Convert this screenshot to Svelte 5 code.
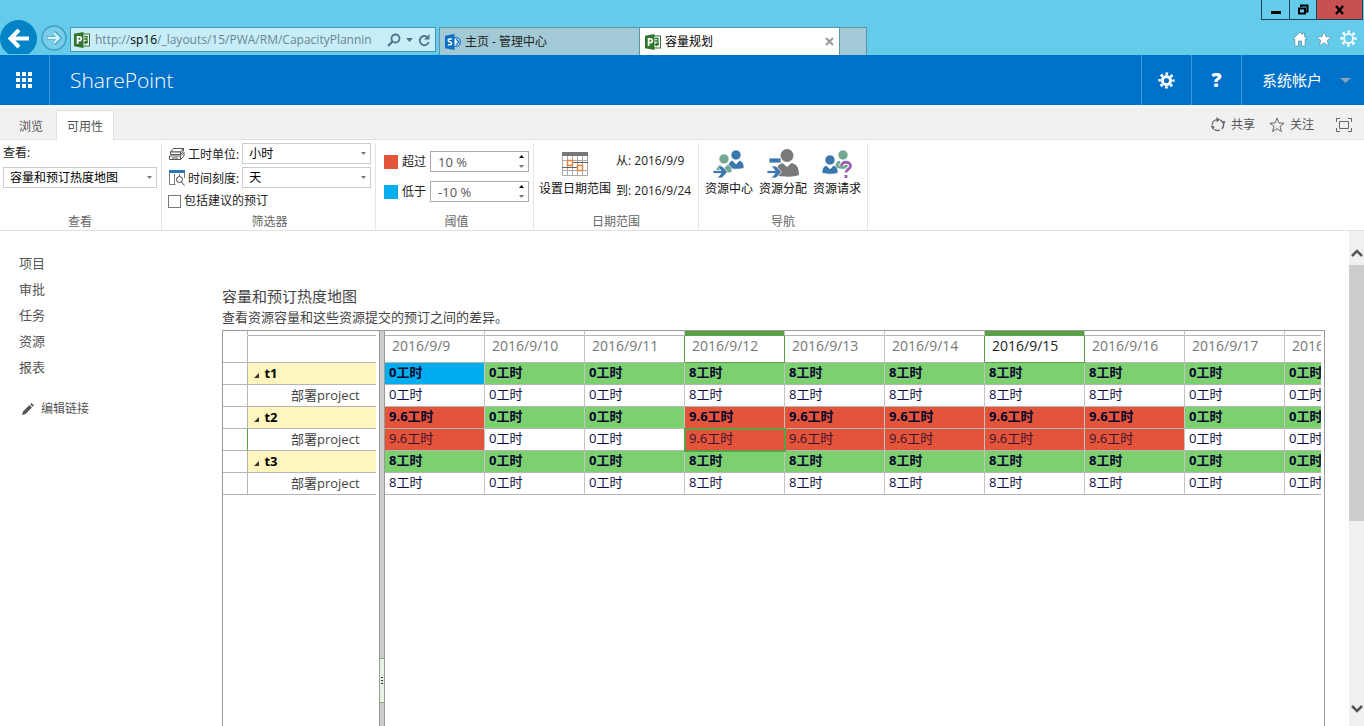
<script lang="ts">
  type Level = 'under' | 'ok' | 'over' | 'none';

  interface Row {
    name: string;
    summary: boolean;
    hours: number[];
    levels: Level[];
  }

  const dates = [
    '2016/9/9',
    '2016/9/10',
    '2016/9/11',
    '2016/9/12',
    '2016/9/13',
    '2016/9/14',
    '2016/9/15',
    '2016/9/16',
    '2016/9/17',
    '2016/9/18',
  ];
  const today = '2016/9/15';
  const selected = { row: 3, col: 3 };

  const workdays = [3, 4, 5, 6, 7];
  const week = (first: number, hours: number) =>
    dates.map((_, i) => (i === 0 ? first : workdays.includes(i) ? hours : 0));
  const fill = (hours: number[], summary: boolean): Level[] =>
    hours.map((h) => (h > 8 ? 'over' : summary ? 'ok' : 'none'));

  function makeRow(name: string, summary: boolean, hours: number[]): Row {
    return { name, summary, hours, levels: fill(hours, summary) };
  }

  const rows: Row[] = [
    makeRow('t1', true, week(0, 8)),
    makeRow('部署project', false, week(0, 8)),
    makeRow('t2', true, week(9.6, 9.6)),
    makeRow('部署project', false, week(9.6, 9.6)),
    makeRow('t3', true, week(8, 8)),
    makeRow('部署project', false, week(8, 8)),
  ];
  rows[0].levels[0] = 'under';

  const links = ['项目', '审批', '任务', '资源', '报表'];

  let view = $state('容量和预订热度地图');
  let unit = $state('小时');
  let scale = $state('天');
  let includeProposed = $state(false);
  let over = $state(10);
  let under = $state(-10);
</script>

{#snippet projectIcon()}
  <svg width="16" height="16" viewBox="0 0 16 16">
    <rect x="8" y="2" width="7.5" height="12" fill="#fff" stroke="#31752f" />
    <path d="M10 4.500h3v2.500h-3M13 7v3M10 10.500h4M12 9l-1.500 1.500L12 12" fill="none" stroke="#31752f" stroke-width="1.3" />
    <path d="M0 1.7 9.5 0v16L0 14.3z" fill="#31752f" />
    <path d="M3.6 12V4.9h1.700c2.600 0 2.600 3.800 0 3.800H3.800" fill="none" stroke="#fff" stroke-width="1.7" />
  </svg>
{/snippet}

{#snippet gearIcon(size: number, color: string, hollow: boolean)}
  <svg width={size} height={size} viewBox="0 0 18 18">
    <g stroke={color} fill="none">
      <circle cx="9" cy="9" r={hollow ? 4.8 : 4.3} stroke-width={hollow ? 1.8 : 3.2} />
      <circle cx="9" cy="9" r="7.3" stroke-width="2.6" stroke-dasharray="2.87 2.87" stroke-dashoffset="1.4" />
    </g>
  </svg>
{/snippet}

{#snippet caret()}
  <svg class="caret" width="5" height="3" viewBox="0 0 5 3"><path d="M0 0h5L2.5 3z" fill="#777" /></svg>
{/snippet}

{#snippet person(x: number, y: number, color: string)}
  <g transform="translate({x} {y})">
    <circle cx="8" cy="5" r="5" fill={color} stroke="#fff" stroke-width=".6" />
    <path d="M0 18c0-4.500 1.500-7 4.500-7.500L8 14l3.500-3.500c3 .5 4.500 3 4.500 7.500-4 1.600-12 1.600-16 0z" fill={color} stroke="#fff" stroke-width=".6" />
  </g>
{/snippet}

<div class="app">
  <header class="chrome">
    <button class="back" aria-label="后退">
      <svg width="38" height="34" viewBox="0 0 38 34">
        <circle cx="18.500" cy="18.500" r="18.500" fill="#0284c6" />
        <path d="M29 18.500H11M19 10l-8.500 8.500L19 27" fill="none" stroke="#fff" stroke-width="4" />
      </svg>
    </button>
    <button class="forward" aria-label="前进">
      <svg width="26" height="26" viewBox="0 0 26 26">
        <circle cx="13" cy="13" r="12" fill="#78cdea" stroke="#3e9fc4" stroke-width="1.500" />
        <path d="M6 13h12M13 7.500l5.500 5.500-5.500 5.500" fill="none" stroke="#3e9fc4" stroke-width="4" />
        <path d="M6.500 13h11M13 8l5 5-5 5" fill="none" stroke="#d5f3fd" stroke-width="2.400" />
      </svg>
    </button>
    <div class="address">
      {@render projectIcon()}
      <span class="url">http://<b>sp16</b>/_layouts/15/PWA/RM/CapacityPlannin</span>
      <svg width="14" height="14" viewBox="0 0 14 14" fill="none" stroke="#4c7686">
        <circle cx="8.500" cy="5.500" r="4" stroke-width="1.800" />
        <path d="M5.500 8.500 1 13" stroke-width="2.200" />
      </svg>
      <svg width="7" height="4" viewBox="0 0 7 4"><path d="M0 0h7L3.500 4z" fill="#4c7686" /></svg>
      <svg width="13" height="14" viewBox="0 0 13 14">
        <path d="M10.500 5.500A4.600 4.600 0 1 0 10.800 9" fill="none" stroke="#4c7686" stroke-width="1.900" />
        <path d="M11.500 1v5.500H6z" fill="#4c7686" />
      </svg>
    </div>
    <nav class="tabs">
      <button class="tab">
        <svg width="16" height="16" viewBox="0 0 16 16">
          <circle cx="11" cy="8" r="4.300" fill="#fff" stroke="#0f6fc4" stroke-width="1.200" />
          <path d="M11 5l3 3-3 3" fill="none" stroke="#0f6fc4" stroke-width="1.400" />
          <path d="M0 1.700 9.500 0v16L0 14.300z" fill="#0f6fc4" />
          <path d="M6.800 5.300c-4-1.400-4.600 1.600-2 2.500 3 1 2.100 4-1.900 2.700" fill="none" stroke="#fff" stroke-width="1.500" />
        </svg>
        <span>主页 - 管理中心</span>
      </button>
      <button class="tab active">
        {@render projectIcon()}
        <span>容量规划</span>
        <svg class="close-tab" width="9" height="9" viewBox="0 0 9 9"><path d="M1 1l7 7M8 1 1 8" stroke="#999" stroke-width="2" /></svg>
      </button>
      <button class="tab new-tab" aria-label="新建选项卡"></button>
    </nav>
    <div class="window-side">
      <div class="window-buttons">
        <button class="minimise" aria-label="最小化">
          <svg width="12" height="12" viewBox="0 0 12 12"><path d="M1 7h10v3H1z" fill="#000" /></svg>
        </button>
        <button class="restore" aria-label="还原">
          <svg width="12" height="12" viewBox="0 0 12 12"><path d="M4 3V1.500h6.500v6H9M2 4.500h6v5H2z" fill="none" stroke="#000" stroke-width="2" /></svg>
        </button>
        <button class="close" aria-label="关闭">
          <svg width="12" height="12" viewBox="0 0 12 12"><path d="M2 2l7 8M9 2l-7 8" stroke="#000" stroke-width="2.400" /></svg>
        </button>
      </div>
      <div class="tools">
        <button aria-label="主页">
          <svg width="16" height="16" viewBox="0 0 16 16"><path d="M8 1 .8 8.300h2V15h3.700v-5h3v5h3.700V8.300h2L12.500 5.500V2h-2v1.500z" fill="#fff" stroke="#5a93a8" stroke-width=".8" /></svg>
        </button>
        <button aria-label="收藏夹">
          <svg width="16" height="16" viewBox="0 0 16 16"><path d="M8 .5l2 5.200 5.600.2-4.400 3.500 1.600 5.600L8 11.800 3.200 15l1.600-5.600L.4 5.900 6 5.700z" fill="#fff" stroke="#5a93a8" stroke-width=".7" /></svg>
        </button>
        <button aria-label="工具">{@render gearIcon(17, '#fff', true)}</button>
      </div>
    </div>
  </header>

  <div class="suite">
    <button class="launcher" aria-label="应用">
      <svg width="16" height="16" viewBox="0 0 16 16" fill="#fff">
        {#each [0, 6, 12] as y}
          {#each [0, 6, 12] as x}
            <rect {x} {y} width="4" height="4" />
          {/each}
        {/each}
      </svg>
    </button>
    <a class="brand" href="#home">SharePoint</a>
    <button class="suite-button" aria-label="设置">{@render gearIcon(17, '#fff', false)}</button>
    <button class="suite-button help">?</button>
    <button class="account">
      <span>系统帐户</span>
      <svg width="11" height="5" viewBox="0 0 11 5"><path d="M0 0h11L5.500 5z" fill="#8aa3b8" /></svg>
    </button>
  </div>

  <div class="ribbon-tabs">
    <button class="ribbon-tab">浏览</button>
    <button class="ribbon-tab current">可用性</button>
    <div class="page-actions">
      <button>
        <svg width="16" height="16" viewBox="0 0 16 16">
          <path d="M2.200 8.500A5.600 5.600 0 0 1 7 2.600M13.500 7a5.600 5.600 0 0 1-1.500 5M10 13.200a5.600 5.600 0 0 1-5.500-.8M10 2.900a5.600 5.600 0 0 1 2.600 2" fill="none" stroke="#666" stroke-width="1.300" />
          <path d="M6.500 0 10 2.700 6.500 5.200zM11 4.500l4.500-.5-1.500 4zM.5 9l4 .2-1 4z" fill="#666" />
        </svg>
        <span>共享</span>
      </button>
      <button>
        <svg width="16" height="16" viewBox="0 0 16 16"><path d="M8 1l1.900 5 5.200.2-4.100 3.200 1.500 5.100L8 11.600l-4.500 2.900L5 9.400.9 6.200 6.100 6z" fill="none" stroke="#666" /></svg>
        <span>关注</span>
      </button>
      <button class="focus" aria-label="专注于内容">
        <svg width="16" height="14" viewBox="0 0 16 14" fill="none" stroke="#666"><path d="M3.500 3.500h9v7h-9zM.5 4V.5H4M12 .5h3.500V4M15.500 10v3.500H12M4 13.500H.5V10" /></svg>
      </button>
    </div>
  </div>

  <div class="ribbon">
    <section class="group view">
      <div class="body">
        <label for="view">查看:</label>
        <div class="drop">
          <select id="view" bind:value={view}><option>容量和预订热度地图</option></select>
          {@render caret()}
        </div>
      </div>
      <h3>查看</h3>
    </section>

    <section class="group filter">
      <div class="body">
        <div class="field">
          <svg width="16" height="14" viewBox="0 0 16 14" fill="#fff" stroke="#555">
            <path d="M4.500 1.500h10l-3 3.500h-10z" />
            <path d="M1.500 5h10v2.500h-10zM11.500 5l3-3.500V4l-3 3.500" />
            <path d="M.5 9h11v3.500H.5zM11.500 9l3.500-3.500V9l-3.500 3.500M3 11h6" />
          </svg>
          <label for="unit">工时单位:</label>
          <div class="drop">
            <select id="unit" bind:value={unit}><option>小时</option></select>
            {@render caret()}
          </div>
        </div>
        <div class="field">
          <svg width="16" height="16" viewBox="0 0 16 16" fill="none" stroke="#777">
            <path d="M.5 2.500v12h6M5.500 4v10M10.500 4v2M15.500 2.500V8" />
            <path d="M0 1.500h16" stroke="#2a77b8" stroke-width="3" />
            <circle cx="10.500" cy="9.500" r="3" stroke="#444" />
            <path d="M12.500 12l3 3.500" stroke="#444" />
          </svg>
          <label for="scale">时间刻度:</label>
          <div class="drop">
            <select id="scale" bind:value={scale}><option>天</option></select>
            {@render caret()}
          </div>
        </div>
        <label class="check"><input type="checkbox" bind:checked={includeProposed} />包括建议的预订</label>
      </div>
      <h3>筛选器</h3>
    </section>

    <section class="group threshold">
      <div class="body">
        <div class="field">
          <i class="swatch over"></i>
          <label for="over">超过</label>
          <div class="spin">
            <input id="over" value="{over} %" />
            <div class="steps">
              <button aria-label="增加" onclick={() => over++}><svg width="5" height="3" viewBox="0 0 5 3"><path d="M0 3h5L2.500 0z" /></svg></button>
              <button aria-label="减少" onclick={() => over--}><svg width="5" height="3" viewBox="0 0 5 3"><path d="M0 0h5L2.500 3z" fill="#777" /></svg></button>
            </div>
          </div>
        </div>
        <div class="field">
          <i class="swatch under"></i>
          <label for="under">低于</label>
          <div class="spin">
            <input id="under" value="{under} %" />
            <div class="steps">
              <button aria-label="增加" onclick={() => under++}><svg width="5" height="3" viewBox="0 0 5 3"><path d="M0 3h5L2.500 0z" /></svg></button>
              <button aria-label="减少" onclick={() => under--}><svg width="5" height="3" viewBox="0 0 5 3"><path d="M0 0h5L2.500 3z" fill="#777" /></svg></button>
            </div>
          </div>
        </div>
      </div>
      <h3>阈值</h3>
    </section>

    <section class="group range">
      <div class="body">
        <button class="big">
          <svg width="26" height="30" viewBox="0 0 26 30" fill="none">
            <path d="M.5 6.500h25v20H.5zM5.500 6v20M10.500 6v20M15.500 6v20M20.500 6v20M0 11.500h26M0 21.500h26" stroke="#aaa" />
            <path d="M0 3h26v4H0z" fill="#777" />
            <path d="M10 13.500h16M0 18.500h16" stroke="#666" />
            <path d="M5.500 11.500h5v5h-5zM15.500 16.500h5v5h-5z" fill="#fff" stroke="#e58432" stroke-width="1.400" />
          </svg>
          <span>设置日期范围</span>
        </button>
        <div class="dates">
          <span>从: 2016/9/9</span>
          <span>到: 2016/9/24</span>
        </div>
      </div>
      <h3>日期范围</h3>
    </section>

    <section class="group navigate">
      <div class="body">
        <button class="big">
          <svg width="32" height="30" viewBox="0 0 32 30">
            {@render person(15, 1, '#3a77ad')}
            {@render person(3, 5, '#74a892')}
            <path d="M0 21.500h8l-4-4.500h5l5.500 6-5.500 6H4l4-4.500H0z" fill="#3a77ad" stroke="#fff" stroke-width=".8" />
          </svg>
          <span>资源中心</span>
        </button>
        <button class="big">
          <svg width="32" height="30" viewBox="0 0 32 30">
            <circle cx="20" cy="6.500" r="6.500" fill="#7a7a7a" />
            <path d="M10 27V21c0-4 2-6 5.500-7l4.500 4 4.500-4c5 1 7.500 4 7.500 12-5 2-12 2-22 1z" fill="#7a7a7a" />
            <path d="M2 9h12v5H2zM0 21.500h8L4 17h5l5.500 6L9 29H4l4-4.500H0z" fill="#3a77ad" stroke="#fff" stroke-width=".8" />
          </svg>
          <span>资源分配</span>
        </button>
        <button class="big">
          <svg width="32" height="30" viewBox="0 0 32 30">
            {@render person(14, 1, '#74a892')}
            {@render person(1, 6, '#3a77ad')}
            <path d="M20.500 17c0-5 9-5 9 0 0 3.500-4.500 3-4.500 6.500M25 26v3" fill="none" stroke="#fff" stroke-width="5" />
            <path d="M20.500 17c0-5 9-5 9 0 0 3.500-4.500 3-4.500 6.500M25 26v3" fill="none" stroke="#9a5fb5" stroke-width="2.800" />
          </svg>
          <span>资源请求</span>
        </button>
      </div>
      <h3>导航</h3>
    </section>
  </div>

  <div class="workspace">
    <nav class="side">
      {#each links as link}
        <a href="#{link}">{link}</a>
      {/each}
      <a class="edit" href="#edit">
        <svg width="12" height="12" viewBox="0 0 12 12" fill="#555"><path d="M0 12l1-3.500L7.500 2 10 4.500 3.500 11zM8.200 1.300 9.500 0 12 2.500l-1.300 1.300z" /></svg>
        编辑链接
      </a>
    </nav>

    <main>
      <h1>容量和预订热度地图</h1>
      <p>查看资源容量和这些资源提交的预订之间的差异。</p>
      <div class="heatmap">
        <table class="names">
          <thead>
            <tr class="strip"><th class="mark"></th><th></th></tr>
            <tr class="head"><th class="mark"></th><th></th></tr>
          </thead>
          <tbody>
            {#each rows as row, r}
              <tr>
                <td class="mark" class:picked={r === selected.row}></td>
                <td class={row.summary ? 'resource' : 'project'}>
                  {#if row.summary}
                    <svg width="5" height="5" viewBox="0 0 5 5"><path d="M5 0v5H0z" fill="#333" /></svg>
                  {/if}
                  {row.name}
                </td>
              </tr>
            {/each}
          </tbody>
        </table>
        <div class="splitter"><div class="grip"><i></i><i></i><i></i></div></div>
        <div class="timeline">
          <table>
            <thead>
              <tr class="strip">
                {#each dates as date, c}
                  <th class:bar={c === selected.col || date === today}></th>
                {/each}
              </tr>
              <tr class="head">
                {#each dates as date, c}
                  <th class:framed={c === selected.col || date === today} class:before={c + 1 === selected.col || dates[c + 1] === today} class:today={date === today}>{date}</th>
                {/each}
              </tr>
            </thead>
            <tbody>
              {#each rows as row, r}
                <tr class:summary={row.summary}>
                  {#each row.hours as hours, c}
                    <td class={row.levels[c]} class:selected={r === selected.row && c === selected.col}>{hours}工时</td>
                  {/each}
                </tr>
              {/each}
            </tbody>
          </table>
        </div>
      </div>
    </main>

    <div class="scrollbar">
      <button aria-label="向上滚动"><svg width="12" height="8" viewBox="0 0 12 8"><path d="M1 7l5-5 5 5" fill="none" stroke="#555" stroke-width="2.500" /></svg></button>
      <div class="track"><div class="thumb"></div></div>
      <button aria-label="向下滚动"><svg width="12" height="8" viewBox="0 0 12 8"><path d="M1 1l5 5 5-5" fill="none" stroke="#555" stroke-width="2.500" /></svg></button>
    </div>
  </div>
</div>

<style>
  :global(body) {
    margin: 0;
  }

  .app {
    display: flex;
    flex-direction: column;
    height: 100vh;
    overflow: hidden;
    background: #fff;
    color: #333;
    font-family: 'Open Sans', 'Noto Sans CJK SC', sans-serif;
    font-size: 12px;
    line-height: 16px;
  }

  .app * {
    box-sizing: border-box;
  }

  button, input, select {
    margin: 0;
    padding: 0;
    border: 0;
    border-radius: 0;
    background: none;
    color: inherit;
    font: inherit;
  }

  a {
    color: inherit;
    text-decoration: none;
  }

  svg {
    display: block;
    flex: none;
  }

  h1, h3, p {
    margin: 0;
    font-weight: 400;
  }

  /* browser frame */
  .chrome {
    display: flex;
    flex: none;
    height: 55px;
    background: #65cbeb;
  }

  .back {
    padding-top: 20px;
    align-self: flex-start;
  }

  .forward {
    padding: 25px 3px 0;
    align-self: flex-start;
  }

  .address {
    display: flex;
    align-items: center;
    gap: 5px;
    width: 366px;
    height: 25px;
    margin: 27px 3px 0 0;
    padding: 0 4px 0 3px;
    border: 1px solid #4b95ad;
    background: #c6edf8;
  }

  .url {
    flex: 1;
    overflow: hidden;
    color: #6a8791;
    white-space: nowrap;
  }

  .url b {
    color: #000;
    font-weight: 400;
  }

  .tabs {
    display: flex;
    margin-top: 27px;
  }

  .tab {
    display: flex;
    align-items: center;
    gap: 4px;
    width: 200px;
    padding: 0 5px;
    border: 1px solid #5c95a8;
    border-bottom: 0;
    border-left-width: 0;
    background: #a2c9d6;
    color: #222;
  }

  .tab:first-child {
    width: 201px;
    border-left-width: 1px;
  }

  .tab.active {
    background: #fff;
    color: #000;
  }

  .tab.new-tab {
    width: 27px;
  }

  .close-tab {
    margin-left: auto;
  }

  .window-side {
    display: flex;
    flex-direction: column;
    align-items: flex-end;
    justify-content: space-between;
    margin-left: auto;
    padding-right: 1px;
  }

  .window-buttons {
    display: flex;
    height: 20px;
    border: 1px solid #1d4558;
    border-top: 0;
  }

  .window-buttons button {
    display: grid;
    place-items: center;
    width: 27px;
  }

  .window-buttons button + button {
    border-left: 1px solid #1d4558;
  }

  .window-buttons .close {
    width: 46px;
    background: #c75050;
  }

  .tools {
    display: flex;
    gap: 8px;
    padding: 0 6px 8px 0;
  }

  /* suite bar */
  .suite {
    display: flex;
    flex: none;
    align-items: stretch;
    height: 50px;
    background: #0071c9;
    color: #fff;
  }

  .launcher {
    display: grid;
    place-items: center;
    width: 50px;
    padding-right: 1px;
    border-right: 1px solid #3f9be0;
  }

  .brand {
    flex: 1;
    padding-left: 20px;
    font-size: 21px;
    font-weight: 300;
    line-height: 50px;
  }

  .suite-button {
    display: grid;
    place-items: center;
    width: 50px;
    border-left: 1px solid #3f9be0;
  }

  .help {
    font-size: 20px;
    font-weight: 800;
  }

  .account {
    display: flex;
    align-items: center;
    justify-content: space-between;
    width: 123px;
    padding: 0 13px 0 20px;
    border-left: 1px solid #3f9be0;
    font-size: 15px;
  }

  /* ribbon tabs */
  .ribbon-tabs {
    display: flex;
    flex: none;
    align-items: flex-end;
    height: 35px;
    padding-left: 6px;
    border-top: 3px solid #f0f9fd;
    border-bottom: 1px solid #e1e1e1;
    background: #f1f1f1;
    color: #555;
  }

  .ribbon-tab {
    width: 50px;
    height: 28px;
    padding-top: 2px;
    border: 1px solid transparent;
    border-bottom: 0;
  }

  .ribbon-tab.current {
    height: 30px;
    width: 58px;
    margin-bottom: -1px;
    border-color: #e1e1e1;
    background: #fff;
  }

  .page-actions {
    display: flex;
    align-items: center;
    align-self: stretch;
    gap: 14px;
    margin-left: auto;
    padding: 2px 12px 0 0;
  }

  .page-actions button {
    display: flex;
    align-items: center;
    gap: 5px;
  }

  .page-actions .focus {
    margin-left: 8px;
  }

  /* ribbon */
  .ribbon {
    display: flex;
    flex: none;
    height: 91px;
    padding-top: 3px;
    border-bottom: 1px solid #e1e1e1;
    color: #222;
  }

  .group {
    display: flex;
    flex-direction: column;
    border-right: 1px solid #e5e5e5;
  }

  .group .body {
    flex: 1;
  }

  .group h3 {
    color: #666;
    font-size: 12px;
    line-height: 16px;
    text-align: center;
  }

  .view {
    width: 162px;
    padding: 0 4px 0 3px;
  }

  .view label {
    display: block;
    padding-top: 2px;
    margin-bottom: 6px;
  }

  .filter {
    width: 214px;
    padding: 0 4px 0 6px;
  }

  .threshold {
    width: 158px;
    padding: 0 4px 0 8px;
  }

  .range {
    width: 165px;
    padding: 0 5px;
  }

  .navigate {
    width: 169px;
    padding: 0 4px;
  }

  .drop {
    display: grid;
    flex: 1;
    align-items: center;
  }

  .drop > :global(*) {
    grid-area: 1 / 1;
  }

  .drop select {
    width: 100%;
    height: 21px;
    padding: 0 6px;
    border: 1px solid #ccc;
    background: #fff;
    appearance: none;
    color: #000;
  }

  .drop .caret {
    justify-self: end;
    margin-right: 5px;
    pointer-events: none;
  }

  .field {
    display: flex;
    align-items: center;
    gap: 4px;
  }

  .field label {
    flex: none;
  }

  .filter .field {
    gap: 3px;
    padding-left: 1px;
    margin-bottom: 3px;
  }

  .filter .field label {
    padding-top: 2px;
  }

  .check {
    display: flex;
    align-items: center;
    gap: 3px;
    padding-top: 2px;
  }

  .check input {
    width: 13px;
    height: 13px;
    border: 1px solid #777;
    background: #fff;
    appearance: none;
  }

  .check input:checked {
    background: #555;
  }

  .threshold .field {
    margin: 8px 0 9px;
  }

  .swatch {
    flex: none;
    width: 14px;
    height: 14px;
  }

  .swatch.over {
    background: #e2553a;
  }

  .swatch.under {
    background: #00adef;
  }

  .spin {
    display: flex;
    flex: 1;
    min-width: 0;
    height: 21px;
    border: 1px solid #aaa;
  }

  .spin input {
    flex: 1;
    width: 100%;
    min-width: 0;
    padding-left: 7px;
    color: #555;
    font-size: 13px;
  }

  .steps {
    display: flex;
    flex: none;
    flex-direction: column;
    width: 13px;
  }

  .steps button {
    display: grid;
    flex: 1;
    place-items: center;
  }

  .range .body,
  .navigate .body {
    display: flex;
    gap: 5px;
    align-items: flex-start;
    padding-top: 6px;
  }

  .navigate .body {
    justify-content: center;
    gap: 6px;
  }

  .big {
    display: flex;
    flex-direction: column;
    align-items: center;
    gap: 2px;
    color: #111;
  }

  .dates {
    display: flex;
    flex-direction: column;
    gap: 14px;
    padding-top: 4px;
    white-space: nowrap;
  }

  /* page */
  .workspace {
    display: flex;
    flex: 1;
    min-height: 0;
  }

  .side {
    display: flex;
    flex-direction: column;
    width: 222px;
    padding: 19px 0 0 19px;
    color: #555;
    font-size: 13px;
    line-height: 26px;
  }

  .edit {
    display: flex;
    align-items: center;
    gap: 7px;
    margin-top: 16px;
    padding-left: 3px;
    font-size: 12px;
  }

  main {
    display: flex;
    flex: 1;
    flex-direction: column;
    min-width: 0;
    padding: 54px 24px 0 0;
    color: #444;
  }

  h1 {
    font-size: 15px;
    line-height: 22px;
  }

  p {
    margin-bottom: 2px;
    font-size: 13px;
    line-height: 21px;
  }

  .heatmap {
    display: flex;
    flex: 1;
    min-height: 0;
    padding-right: 3px;
    border: 1px solid #999;
    border-bottom: 0;
    font-size: 13px;
    line-height: 19px;
  }

  table {
    border-collapse: separate;
    border-spacing: 0;
    table-layout: fixed;
  }

  th, td {
    overflow: hidden;
    padding: 0;
    border-bottom: 1px solid #b5b5b5;
    font-weight: 400;
    text-align: left;
    vertical-align: top;
    white-space: nowrap;
  }

  .strip th {
    height: 5px;
  }

  .head th {
    height: 27px;
    font-size: 14px;
  }

  tbody td {
    height: 22px;
  }

  .names {
    width: 153px;
    align-self: flex-start;
  }

  .names .mark {
    width: 25px;
    border-right: 1px solid #b5b5b5;
  }

  .names .strip .mark {
    border-bottom-color: transparent;
  }

  .names .mark.picked {
    border-right-color: #5b9f48;
  }

  .names td {
    line-height: 21px;
  }

  .resource {
    padding-left: 6px;
    background: #fef5bf;
    color: #000;
    font-weight: 700;
  }

  .resource svg {
    display: inline-block;
    margin-right: 2px;
  }

  .project {
    padding-left: 43px;
  }

  .splitter {
    display: flex;
    flex: none;
    flex-direction: column;
    justify-content: flex-end;
    width: 6px;
    margin-left: 3px;
    padding-bottom: 23px;
    border: 1px solid #999;
    border-width: 0 1px;
    background: #ccc;
  }

  .grip {
    display: flex;
    flex-direction: column;
    align-items: center;
    justify-content: center;
    gap: 2px;
    height: 45px;
    border: 1px solid #7fb573;
    border-width: 1px 0;
    background: #e6f2e3;
  }

  .grip i {
    width: 2px;
    height: 1px;
    background: #333;
  }

  .timeline {
    flex: 1;
    overflow: hidden;
    min-width: 0;
  }

  .timeline table {
    width: 1000px;
  }

  .timeline th,
  .timeline td {
    border-right: 1px solid #c4c4c4;
  }

  .timeline .bar {
    border-bottom-color: #5b9f48;
    background: #5b9f48;
  }

  .timeline .head th {
    padding-left: 7px;
    color: #777;
  }

  .timeline .head .before {
    border-right-color: #5b9f48;
  }

  .timeline .head .framed {
    border-color: #5b9f48;
  }

  .timeline .head .today {
    color: #222;
  }

  .timeline td {
    padding-left: 4px;
    color: #0b0b45;
  }

  .timeline .over {
    background: #e2553a;
    color: #40102c;
  }

  .timeline .summary td {
    color: #06062c;
    font-weight: 700;
  }

  .timeline .ok {
    background: #7dd070;
  }

  .timeline .under {
    background: #00adef;
  }

  .timeline .selected {
    position: relative;
    z-index: 1;
    outline: 2px solid #5b9f48;
    outline-offset: -1px;
  }

  .scrollbar {
    display: flex;
    flex-direction: column;
    flex: none;
    width: 15px;
    background: #f0f0f0;
  }

  .scrollbar button {
    display: grid;
    place-items: center;
    height: 34px;
  }

  .scrollbar button:first-child {
    padding-top: 10px;
  }

  .track {
    flex: 1;
  }

  .thumb {
    height: 60%;
    background: #cdcdcd;
  }
</style>
